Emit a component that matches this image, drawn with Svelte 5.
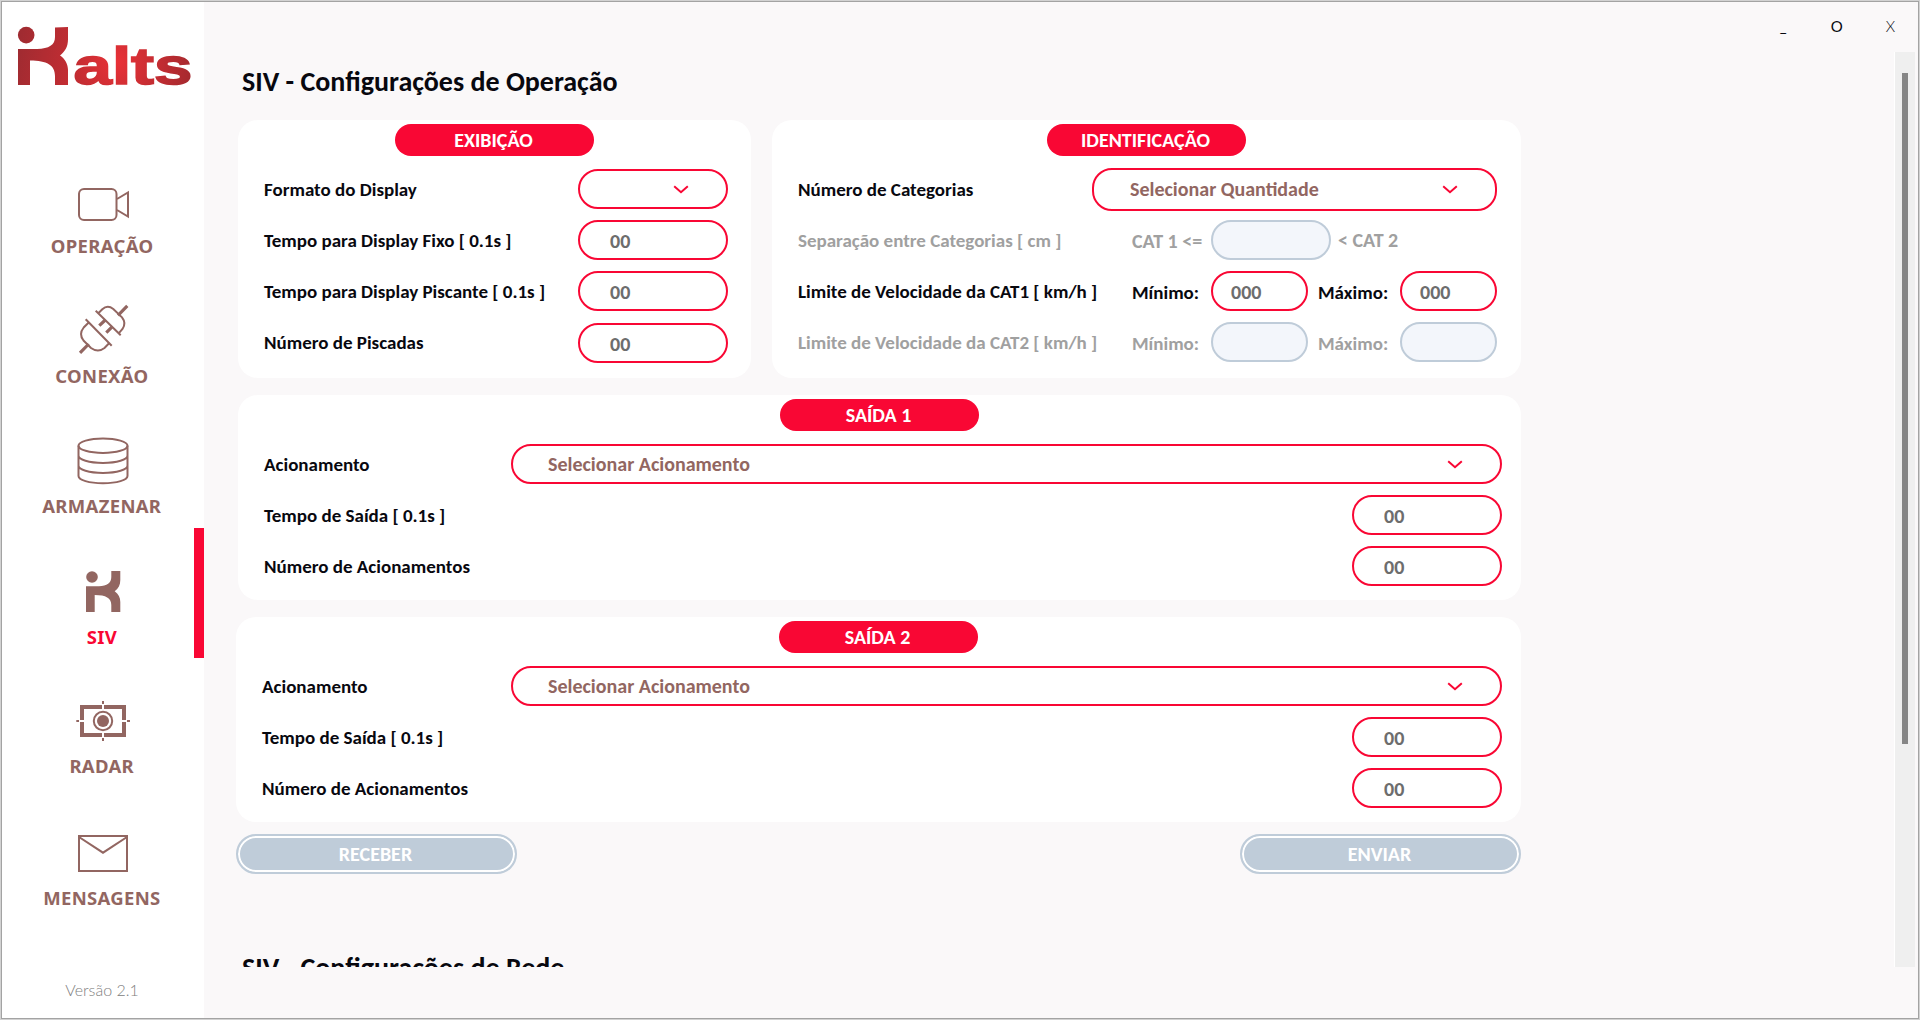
<script>
  const menu = [
    { id: 'operacao', label: 'OPERAÇÃO' },
    { id: 'conexao', label: 'CONEXÃO' },
    { id: 'armazenar', label: 'ARMAZENAR' },
    { id: 'siv', label: 'SIV' },
    { id: 'radar', label: 'RADAR' },
    { id: 'mensagens', label: 'MENSAGENS' },
  ];
  const active = 'siv';
  const displayFields = [
    'Tempo para Display Fixo [ 0.1s ]',
    'Tempo para Display Piscante [ 0.1s ]',
    'Número de Piscadas',
  ];
  const outputs = ['SAÍDA 1', 'SAÍDA 2'];
</script>

{#snippet chevron()}
  <svg class="chevron" width="16" height="9" viewBox="0 0 16 9"><path d="M1.2 1.2 8 7.2 14.8 1.2" /></svg>
{/snippet}

<div class="window">
  <aside>
    <svg class="logo" width="184" height="64" viewBox="16 24 184 64">
      <defs>
        <linearGradient id="mark" gradientUnits="userSpaceOnUse" x1="18" y1="40" x2="75" y2="50">
          <stop offset="0" stop-color="#9f2b31" />
          <stop offset="1" stop-color="#c42d33" />
        </linearGradient>
        <radialGradient id="word" gradientUnits="userSpaceOnUse" cx="117" cy="62" r="78">
          <stop offset="0" stop-color="#e93137" />
          <stop offset="1" stop-color="#a3292e" />
        </radialGradient>
      </defs>
      <circle cx="26.2" cy="35.1" r="8.3" fill="url(#mark)" />
      <path
        fill="url(#mark)"
        d="M18 85V49H37C49 48.6 55 45 55 37V27.6L68 27V39C68 47 65 51.5 60 55.4C65 58.5 68 64 68 70V85H55V76C55 65 47 60.5 30 60.5V85Z"
      />
      <text x="73.5" y="84" textLength="119" lengthAdjust="spacingAndGlyphs" fill="url(#word)" stroke="url(#word)">alts</text>
    </svg>

    <nav>
      {#each menu as item}
        <div class="item {item.id}" class:active={item.id === active}>
          <svg class="icon" width="60" height="60" viewBox="0 0 60 60">
            {#if item.id === 'operacao'}
              <rect x="6" y="16" width="37.5" height="31" rx="5" />
              <path d="M44 26 55 19.5V43.5L44 37" />
            {:else if item.id === 'conexao'}
              <path d="M22.7 7.7 47.7 32.3M25.3 10.3 29.3 6.3Q34.5 1.5 40.3 6L49 14.3Q53.5 20 49.5 26L45.7 30.3" />
              <path d="M12.7 16.3 38.7 42.7M15.7 19.5 10.7 24.5Q5.5 31 10.5 37.5L18 45Q25 50 31.5 45L35.8 40.5" />
              <path class="thick" d="M45 12.3 54.3 2.9M32.3 17 26.3 22.7M39.3 23.7 33.3 29.7M15.7 41 7 49.9" />
            {:else if item.id === 'armazenar'}
              <ellipse cx="30" cy="12.7" rx="24.5" ry="7.2" />
              <path d="M5.5 12.7V43C5.5 47 16 50.2 30 50.2S54.5 47 54.5 43V12.7M5.5 22.5C5.5 26.7 16 29.9 30 29.9S54.5 26.7 54.5 22.5M5.5 32.5C5.5 36.7 16 39.9 30 39.9S54.5 36.7 54.5 32.5" />
            {:else if item.id === 'siv'}
              <circle class="solid" cx="19" cy="14" r="5.8" />
              <path
                class="solid"
                d="M13 49V23.3H26C34 23 38.3 20 38.3 14V8H47.3V17C47.3 22 45.5 25.5 41.7 28.3C45.5 31 47.3 34.5 47.3 39V49H38.3V42C38.3 35 33 32 21.7 32V49Z"
              />
            {:else if item.id === 'radar'}
              <path class="frame" d="M29 14H9V27M9 29V42H29M31 42H51V29M51 27V14H31" />
              <path d="M30 8V11M30 45V48M3.3 28H6M54 28H57" />
              <circle cx="30" cy="28" r="9.2" />
              <circle class="solid" cx="30" cy="28" r="6" />
            {:else}
              <rect x="6" y="13" width="48" height="35" />
              <path d="M6 14 30 29.7 54 14" />
            {/if}
          </svg>
          <span>{item.label}</span>
        </div>
      {/each}
    </nav>
    <p class="version">Versão 2.1</p>
  </aside>

  <main>
    <header>
      <span class="min">_</span><span class="max">O</span><span class="close">X</span>
    </header>
    <div class="scroller">
      <div class="content">
        <h1>SIV - Configurações de Operação</h1>

        <div class="top">
          <section class="card display">
            <h2>EXIBIÇÃO</h2>
            <div class="row">
              <span class="label">Formato do Display</span>
              <div class="field select short">{@render chevron()}</div>
            </div>
            {#each displayFields as name}
              <div class="row">
                <span class="label">{name}</span>
                <div class="field number">00</div>
              </div>
            {/each}
          </section>

          <section class="card ident">
            <h2>IDENTIFICAÇÃO</h2>
            <div class="row">
              <span class="label">Número de Categorias</span>
              <div class="field select quantity"><span>Selecionar Quantidade</span>{@render chevron()}</div>
            </div>
            <div class="row off">
              <span class="label">Separação entre Categorias [ cm ]</span>
              <div class="split">
                <span class="cat">CAT 1 &lt;=</span>
                <div class="field medium"></div>
                <span class="cat after">&lt; CAT 2</span>
              </div>
            </div>
            {#each [1, 2] as n}
              <div class="row" class:off={n === 2}>
                <span class="label">Limite de Velocidade da CAT{n} [ km/h ]</span>
                <div class="split">
                  <span class="bound">Mínimo:</span>
                  <div class="field small">{n === 1 ? '000' : ''}</div>
                  <span class="bound maxi">Máximo:</span>
                  <div class="field small">{n === 1 ? '000' : ''}</div>
                </div>
              </div>
            {/each}
          </section>
        </div>

        {#each outputs as title, i}
          <section class="card output" class:second={i === 1}>
            <h2>{title}</h2>
            <div class="row">
              <span class="label">Acionamento</span>
              <div class="field select action"><span>Selecionar Acionamento</span>{@render chevron()}</div>
            </div>
            <div class="row">
              <span class="label">Tempo de Saída [ 0.1s ]</span>
              <div class="field number">00</div>
            </div>
            <div class="row">
              <span class="label">Número de Acionamentos</span>
              <div class="field number">00</div>
            </div>
          </section>
        {/each}

        <div class="actions">
          <button>RECEBER</button>
          <button>ENVIAR</button>
        </div>

        <h1 class="next">SIV - Configurações de Rede</h1>
      </div>
      <div class="track"><div class="thumb"></div></div>
    </div>
  </main>
</div>

<style>
  :global(body) {
    margin: 0;
    overflow: hidden;
  }
  * {
    box-sizing: border-box;
  }
  .window {
    display: flex;
    width: 1920px;
    height: 1020px;
    border: 1px solid #d2d2d2;
    outline: 1px solid #a3a3a3;
    outline-offset: -2px;
    padding: 1px;
    background: #faf8f9;
    font-family: Calibri, Carlito, Lato, sans-serif;
    font-weight: 700;
    color: #08080f;
    white-space: nowrap;
  }
  aside {
    width: 202px;
    background: #fff;
    display: flex;
    flex-direction: column;
  }
  .logo {
    margin: 22px 0 0 14px;
    flex: none;
    overflow: visible;
  }
  .logo text {
    font: 700 52px 'Liberation Sans', sans-serif;
    stroke-width: 1.5px;
  }
  nav {
    margin-top: 50px;
  }
  .item {
    height: 130px;
    padding-top: 35px;
    display: flex;
    flex-direction: column;
    align-items: center;
    color: #926661;
    font: 700 17px/20px 'Noto Sans', sans-serif;
  }
  .item span {
    margin: 4px 2px 0 0;
    letter-spacing: 0.3px;
    transform: scaleX(1.088);
  }
  .item.active {
    border-right: 10px solid #f90734;
    padding-left: 10px;
    color: #f90734;
  }
  .item.active span {
    margin-top: 5px;
  }
  .item.mensagens span {
    margin-top: 6px;
  }
  .icon {
    flex: none;
    fill: none;
    stroke: #926661;
    stroke-width: 2;
  }
  .icon .thick {
    stroke-width: 3.2;
  }
  .icon .frame {
    stroke-width: 4;
  }
  .icon .solid {
    fill: #926661;
    stroke: none;
  }
  .version {
    margin: 62px 2px 0 0;
    text-align: center;
    font: 300 16px/20px Lato, sans-serif;
    color: #808080;
  }
  main {
    flex: 1;
    display: flex;
    flex-direction: column;
  }
  header {
    height: 50px;
    display: flex;
    justify-content: flex-end;
    padding: 14px 23px 0 0;
    font: 400 15px/20px Lato, sans-serif;
  }
  .max {
    margin: 0 43px 0 44px;
  }
  .close {
    font-weight: 300;
  }
  .scroller {
    height: 915px;
    display: flex;
    justify-content: space-between;
    overflow: hidden;
  }
  .content {
    width: 1317px;
    padding-left: 32px;
  }
  h1 {
    margin: 0;
    height: 68px;
    padding: 14px 0 0 6px;
    font-size: 28px;
    line-height: 32px;
    font-weight: 700;
  }
  h1.next {
    margin-top: 64px;
  }
  .top {
    display: grid;
    grid-template-columns: 513px 749px;
    gap: 21px;
    margin-left: 2px;
  }
  .card {
    background: #fff;
    border-radius: 20px;
    padding: 4px 23px 0 26px;
    height: 258px;
  }
  .ident {
    padding-right: 24px;
  }
  .output {
    height: 205px;
    margin: 17px 0 0 2px;
    padding-right: 19px;
  }
  .second {
    margin-left: 0;
  }
  h2 {
    width: 199px;
    height: 32px;
    margin: 0 auto 7px 131px;
    padding-right: 2px;
    border-radius: 16px;
    background: #f90734;
    color: #fff;
    text-align: center;
    font-size: 20px;
    line-height: 33px;
    font-weight: 700;
  }
  .ident h2 {
    margin-left: 249px;
  }
  .output h2 {
    margin-left: 516px;
  }
  .second h2 {
    margin-left: 517px;
  }
  .row {
    height: 51px;
    padding: 6px 0 5px;
    display: flex;
    align-items: center;
    justify-content: space-between;
    font-size: 19px;
  }
  .display .row:last-child .field {
    margin-top: 2px;
  }
  .off {
    color: #a0a0a0;
  }
  .field {
    flex: none;
    width: 150px;
    height: 40px;
    border: 2px solid #f90734;
    border-radius: 20px;
    padding: 2px 0 0 30px;
    display: flex;
    align-items: center;
    font-size: 20px;
    color: #6d6d6d;
  }
  .off .field {
    border-color: #bfccd9;
    background: #f3f6fb;
  }
  .field.select {
    padding-top: 0;
    justify-content: space-between;
    color: #926661;
  }
  .field.short {
    justify-content: flex-end;
    padding-right: 37px;
  }
  .field.quantity {
    width: 405px;
    height: 43px;
    padding: 0 37px 0 36px;
  }
  .field.action {
    width: 991px;
    padding: 0 37px 0 35px;
  }
  .field.medium {
    width: 120px;
  }
  .field.small {
    width: 97px;
    padding-left: 18px;
  }
  .chevron path {
    fill: none;
    stroke: #f90734;
    stroke-width: 2;
  }
  .split {
    width: 365px;
    display: flex;
    align-items: center;
  }
  .cat {
    width: 79px;
    padding-top: 2px;
    font-size: 20px;
  }
  .cat.after {
    padding: 0 0 0 7px;
  }
  .bound {
    width: 79px;
    padding-top: 3px;
  }
  .bound.maxi {
    width: 92px;
    padding-left: 10px;
  }
  .actions {
    display: flex;
    justify-content: space-between;
    margin-top: 12px;
  }
  button {
    width: 281px;
    height: 40px;
    border: 2px solid #bfccd9;
    border-radius: 20px;
    padding: 2px 4px 2px 2px;
    background: #bfccd9;
    box-shadow: inset 0 0 0 2px #fff;
    color: #fff;
    font: inherit;
    font-size: 20px;
  }
  .track {
    width: 21px;
    margin-right: 3px;
    border-left: 1px solid #fff;
    background: #efefef;
    padding: 21px 7px 0;
  }
  .thumb {
    width: 6px;
    height: 671px;
    background: #868686;
  }
</style>
